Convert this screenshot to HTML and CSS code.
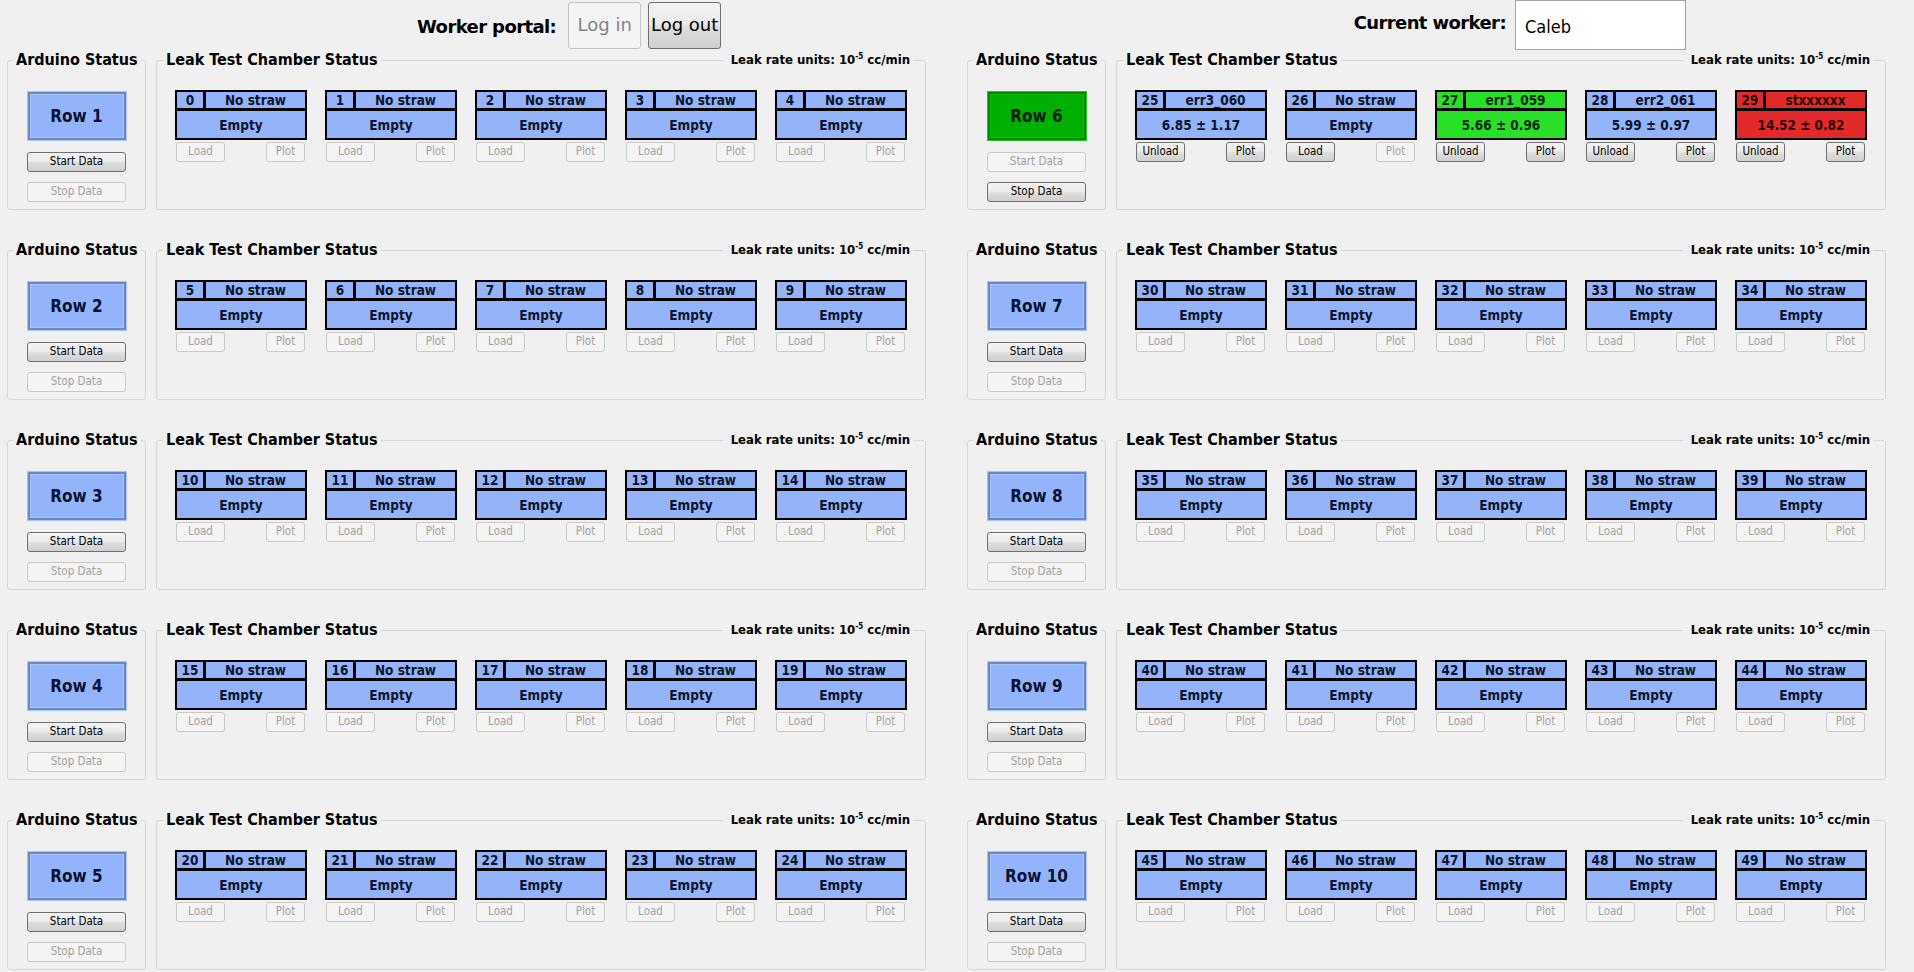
FILE: index.html
```html
<!DOCTYPE html>
<html>
<head>
<meta charset="utf-8">
<link rel="stylesheet" href="styles.css">
</head>
<body>
<div class="topbar">
  <div class="portal">
    <span class="big-label">Worker portal:</span>
    <button class="btn bigbtn" disabled>Log in</button>
    <button class="btn bigbtn">Log out</button>
  </div>
  <div class="worker">
    <span class="big-label cw">Current worker:</span>
    <div class="input">Caleb</div>
  </div>
</div>

<div class="grid">

<!-- Row 1 -->
<div class="row">
  <fieldset class="ard"><legend>Arduino Status</legend>
    <div class="rowbtn">Row 1</div>
    <button class="btn data start">Start Data</button>
    <button class="btn data stop" disabled>Stop Data</button>
  </fieldset>
  <fieldset class="leak"><legend class="leakleg"><span>Leak Test Chamber Status</span><span class="rule"></span><span class="units">Leak rate units: 10<sup>-5</sup> cc/min</span></legend>
    <div class="chambers">
      <div class="slot"><div class="cham"><span class="num">0</span><span class="name">No straw</span><span class="val">Empty</span></div><div class="acts"><button class="btn load" disabled>Load</button><button class="btn plot" disabled>Plot</button></div></div>
      <div class="slot"><div class="cham"><span class="num">1</span><span class="name">No straw</span><span class="val">Empty</span></div><div class="acts"><button class="btn load" disabled>Load</button><button class="btn plot" disabled>Plot</button></div></div>
      <div class="slot"><div class="cham"><span class="num">2</span><span class="name">No straw</span><span class="val">Empty</span></div><div class="acts"><button class="btn load" disabled>Load</button><button class="btn plot" disabled>Plot</button></div></div>
      <div class="slot"><div class="cham"><span class="num">3</span><span class="name">No straw</span><span class="val">Empty</span></div><div class="acts"><button class="btn load" disabled>Load</button><button class="btn plot" disabled>Plot</button></div></div>
      <div class="slot"><div class="cham"><span class="num">4</span><span class="name">No straw</span><span class="val">Empty</span></div><div class="acts"><button class="btn load" disabled>Load</button><button class="btn plot" disabled>Plot</button></div></div>
    </div>
  </fieldset>
</div>

<!-- Row 2 -->
<div class="row">
  <fieldset class="ard"><legend>Arduino Status</legend>
    <div class="rowbtn">Row 2</div>
    <button class="btn data start">Start Data</button>
    <button class="btn data stop" disabled>Stop Data</button>
  </fieldset>
  <fieldset class="leak"><legend class="leakleg"><span>Leak Test Chamber Status</span><span class="rule"></span><span class="units">Leak rate units: 10<sup>-5</sup> cc/min</span></legend>
    <div class="chambers">
      <div class="slot"><div class="cham"><span class="num">5</span><span class="name">No straw</span><span class="val">Empty</span></div><div class="acts"><button class="btn load" disabled>Load</button><button class="btn plot" disabled>Plot</button></div></div>
      <div class="slot"><div class="cham"><span class="num">6</span><span class="name">No straw</span><span class="val">Empty</span></div><div class="acts"><button class="btn load" disabled>Load</button><button class="btn plot" disabled>Plot</button></div></div>
      <div class="slot"><div class="cham"><span class="num">7</span><span class="name">No straw</span><span class="val">Empty</span></div><div class="acts"><button class="btn load" disabled>Load</button><button class="btn plot" disabled>Plot</button></div></div>
      <div class="slot"><div class="cham"><span class="num">8</span><span class="name">No straw</span><span class="val">Empty</span></div><div class="acts"><button class="btn load" disabled>Load</button><button class="btn plot" disabled>Plot</button></div></div>
      <div class="slot"><div class="cham"><span class="num">9</span><span class="name">No straw</span><span class="val">Empty</span></div><div class="acts"><button class="btn load" disabled>Load</button><button class="btn plot" disabled>Plot</button></div></div>
    </div>
  </fieldset>
</div>

<!-- Row 3 -->
<div class="row">
  <fieldset class="ard"><legend>Arduino Status</legend>
    <div class="rowbtn">Row 3</div>
    <button class="btn data start">Start Data</button>
    <button class="btn data stop" disabled>Stop Data</button>
  </fieldset>
  <fieldset class="leak"><legend class="leakleg"><span>Leak Test Chamber Status</span><span class="rule"></span><span class="units">Leak rate units: 10<sup>-5</sup> cc/min</span></legend>
    <div class="chambers">
      <div class="slot"><div class="cham"><span class="num">10</span><span class="name">No straw</span><span class="val">Empty</span></div><div class="acts"><button class="btn load" disabled>Load</button><button class="btn plot" disabled>Plot</button></div></div>
      <div class="slot"><div class="cham"><span class="num">11</span><span class="name">No straw</span><span class="val">Empty</span></div><div class="acts"><button class="btn load" disabled>Load</button><button class="btn plot" disabled>Plot</button></div></div>
      <div class="slot"><div class="cham"><span class="num">12</span><span class="name">No straw</span><span class="val">Empty</span></div><div class="acts"><button class="btn load" disabled>Load</button><button class="btn plot" disabled>Plot</button></div></div>
      <div class="slot"><div class="cham"><span class="num">13</span><span class="name">No straw</span><span class="val">Empty</span></div><div class="acts"><button class="btn load" disabled>Load</button><button class="btn plot" disabled>Plot</button></div></div>
      <div class="slot"><div class="cham"><span class="num">14</span><span class="name">No straw</span><span class="val">Empty</span></div><div class="acts"><button class="btn load" disabled>Load</button><button class="btn plot" disabled>Plot</button></div></div>
    </div>
  </fieldset>
</div>

<!-- Row 4 -->
<div class="row">
  <fieldset class="ard"><legend>Arduino Status</legend>
    <div class="rowbtn">Row 4</div>
    <button class="btn data start">Start Data</button>
    <button class="btn data stop" disabled>Stop Data</button>
  </fieldset>
  <fieldset class="leak"><legend class="leakleg"><span>Leak Test Chamber Status</span><span class="rule"></span><span class="units">Leak rate units: 10<sup>-5</sup> cc/min</span></legend>
    <div class="chambers">
      <div class="slot"><div class="cham"><span class="num">15</span><span class="name">No straw</span><span class="val">Empty</span></div><div class="acts"><button class="btn load" disabled>Load</button><button class="btn plot" disabled>Plot</button></div></div>
      <div class="slot"><div class="cham"><span class="num">16</span><span class="name">No straw</span><span class="val">Empty</span></div><div class="acts"><button class="btn load" disabled>Load</button><button class="btn plot" disabled>Plot</button></div></div>
      <div class="slot"><div class="cham"><span class="num">17</span><span class="name">No straw</span><span class="val">Empty</span></div><div class="acts"><button class="btn load" disabled>Load</button><button class="btn plot" disabled>Plot</button></div></div>
      <div class="slot"><div class="cham"><span class="num">18</span><span class="name">No straw</span><span class="val">Empty</span></div><div class="acts"><button class="btn load" disabled>Load</button><button class="btn plot" disabled>Plot</button></div></div>
      <div class="slot"><div class="cham"><span class="num">19</span><span class="name">No straw</span><span class="val">Empty</span></div><div class="acts"><button class="btn load" disabled>Load</button><button class="btn plot" disabled>Plot</button></div></div>
    </div>
  </fieldset>
</div>

<!-- Row 5 -->
<div class="row">
  <fieldset class="ard"><legend>Arduino Status</legend>
    <div class="rowbtn">Row 5</div>
    <button class="btn data start">Start Data</button>
    <button class="btn data stop" disabled>Stop Data</button>
  </fieldset>
  <fieldset class="leak"><legend class="leakleg"><span>Leak Test Chamber Status</span><span class="rule"></span><span class="units">Leak rate units: 10<sup>-5</sup> cc/min</span></legend>
    <div class="chambers">
      <div class="slot"><div class="cham"><span class="num">20</span><span class="name">No straw</span><span class="val">Empty</span></div><div class="acts"><button class="btn load" disabled>Load</button><button class="btn plot" disabled>Plot</button></div></div>
      <div class="slot"><div class="cham"><span class="num">21</span><span class="name">No straw</span><span class="val">Empty</span></div><div class="acts"><button class="btn load" disabled>Load</button><button class="btn plot" disabled>Plot</button></div></div>
      <div class="slot"><div class="cham"><span class="num">22</span><span class="name">No straw</span><span class="val">Empty</span></div><div class="acts"><button class="btn load" disabled>Load</button><button class="btn plot" disabled>Plot</button></div></div>
      <div class="slot"><div class="cham"><span class="num">23</span><span class="name">No straw</span><span class="val">Empty</span></div><div class="acts"><button class="btn load" disabled>Load</button><button class="btn plot" disabled>Plot</button></div></div>
      <div class="slot"><div class="cham"><span class="num">24</span><span class="name">No straw</span><span class="val">Empty</span></div><div class="acts"><button class="btn load" disabled>Load</button><button class="btn plot" disabled>Plot</button></div></div>
    </div>
  </fieldset>
</div>

<!-- Row 6 -->
<div class="row">
  <fieldset class="ard"><legend>Arduino Status</legend>
    <div class="rowbtn on">Row 6</div>
    <button class="btn data start" disabled>Start Data</button>
    <button class="btn data stop">Stop Data</button>
  </fieldset>
  <fieldset class="leak"><legend class="leakleg"><span>Leak Test Chamber Status</span><span class="rule"></span><span class="units">Leak rate units: 10<sup>-5</sup> cc/min</span></legend>
    <div class="chambers">
      <div class="slot"><div class="cham"><span class="num">25</span><span class="name">err3_060</span><span class="val">6.85 ± 1.17</span></div><div class="acts"><button class="btn load">Unload</button><button class="btn plot">Plot</button></div></div>
      <div class="slot"><div class="cham"><span class="num">26</span><span class="name">No straw</span><span class="val">Empty</span></div><div class="acts"><button class="btn load">Load</button><button class="btn plot" disabled>Plot</button></div></div>
      <div class="slot"><div class="cham green"><span class="num">27</span><span class="name">err1_059</span><span class="val">5.66 ± 0.96</span></div><div class="acts"><button class="btn load">Unload</button><button class="btn plot">Plot</button></div></div>
      <div class="slot"><div class="cham"><span class="num">28</span><span class="name">err2_061</span><span class="val">5.99 ± 0.97</span></div><div class="acts"><button class="btn load">Unload</button><button class="btn plot">Plot</button></div></div>
      <div class="slot"><div class="cham red"><span class="num">29</span><span class="name">stxxxxxx</span><span class="val">14.52 ± 0.82</span></div><div class="acts"><button class="btn load">Unload</button><button class="btn plot">Plot</button></div></div>
    </div>
  </fieldset>
</div>

<!-- Row 7 -->
<div class="row">
  <fieldset class="ard"><legend>Arduino Status</legend>
    <div class="rowbtn">Row 7</div>
    <button class="btn data start">Start Data</button>
    <button class="btn data stop" disabled>Stop Data</button>
  </fieldset>
  <fieldset class="leak"><legend class="leakleg"><span>Leak Test Chamber Status</span><span class="rule"></span><span class="units">Leak rate units: 10<sup>-5</sup> cc/min</span></legend>
    <div class="chambers">
      <div class="slot"><div class="cham"><span class="num">30</span><span class="name">No straw</span><span class="val">Empty</span></div><div class="acts"><button class="btn load" disabled>Load</button><button class="btn plot" disabled>Plot</button></div></div>
      <div class="slot"><div class="cham"><span class="num">31</span><span class="name">No straw</span><span class="val">Empty</span></div><div class="acts"><button class="btn load" disabled>Load</button><button class="btn plot" disabled>Plot</button></div></div>
      <div class="slot"><div class="cham"><span class="num">32</span><span class="name">No straw</span><span class="val">Empty</span></div><div class="acts"><button class="btn load" disabled>Load</button><button class="btn plot" disabled>Plot</button></div></div>
      <div class="slot"><div class="cham"><span class="num">33</span><span class="name">No straw</span><span class="val">Empty</span></div><div class="acts"><button class="btn load" disabled>Load</button><button class="btn plot" disabled>Plot</button></div></div>
      <div class="slot"><div class="cham"><span class="num">34</span><span class="name">No straw</span><span class="val">Empty</span></div><div class="acts"><button class="btn load" disabled>Load</button><button class="btn plot" disabled>Plot</button></div></div>
    </div>
  </fieldset>
</div>

<!-- Row 8 -->
<div class="row">
  <fieldset class="ard"><legend>Arduino Status</legend>
    <div class="rowbtn">Row 8</div>
    <button class="btn data start">Start Data</button>
    <button class="btn data stop" disabled>Stop Data</button>
  </fieldset>
  <fieldset class="leak"><legend class="leakleg"><span>Leak Test Chamber Status</span><span class="rule"></span><span class="units">Leak rate units: 10<sup>-5</sup> cc/min</span></legend>
    <div class="chambers">
      <div class="slot"><div class="cham"><span class="num">35</span><span class="name">No straw</span><span class="val">Empty</span></div><div class="acts"><button class="btn load" disabled>Load</button><button class="btn plot" disabled>Plot</button></div></div>
      <div class="slot"><div class="cham"><span class="num">36</span><span class="name">No straw</span><span class="val">Empty</span></div><div class="acts"><button class="btn load" disabled>Load</button><button class="btn plot" disabled>Plot</button></div></div>
      <div class="slot"><div class="cham"><span class="num">37</span><span class="name">No straw</span><span class="val">Empty</span></div><div class="acts"><button class="btn load" disabled>Load</button><button class="btn plot" disabled>Plot</button></div></div>
      <div class="slot"><div class="cham"><span class="num">38</span><span class="name">No straw</span><span class="val">Empty</span></div><div class="acts"><button class="btn load" disabled>Load</button><button class="btn plot" disabled>Plot</button></div></div>
      <div class="slot"><div class="cham"><span class="num">39</span><span class="name">No straw</span><span class="val">Empty</span></div><div class="acts"><button class="btn load" disabled>Load</button><button class="btn plot" disabled>Plot</button></div></div>
    </div>
  </fieldset>
</div>

<!-- Row 9 -->
<div class="row">
  <fieldset class="ard"><legend>Arduino Status</legend>
    <div class="rowbtn">Row 9</div>
    <button class="btn data start">Start Data</button>
    <button class="btn data stop" disabled>Stop Data</button>
  </fieldset>
  <fieldset class="leak"><legend class="leakleg"><span>Leak Test Chamber Status</span><span class="rule"></span><span class="units">Leak rate units: 10<sup>-5</sup> cc/min</span></legend>
    <div class="chambers">
      <div class="slot"><div class="cham"><span class="num">40</span><span class="name">No straw</span><span class="val">Empty</span></div><div class="acts"><button class="btn load" disabled>Load</button><button class="btn plot" disabled>Plot</button></div></div>
      <div class="slot"><div class="cham"><span class="num">41</span><span class="name">No straw</span><span class="val">Empty</span></div><div class="acts"><button class="btn load" disabled>Load</button><button class="btn plot" disabled>Plot</button></div></div>
      <div class="slot"><div class="cham"><span class="num">42</span><span class="name">No straw</span><span class="val">Empty</span></div><div class="acts"><button class="btn load" disabled>Load</button><button class="btn plot" disabled>Plot</button></div></div>
      <div class="slot"><div class="cham"><span class="num">43</span><span class="name">No straw</span><span class="val">Empty</span></div><div class="acts"><button class="btn load" disabled>Load</button><button class="btn plot" disabled>Plot</button></div></div>
      <div class="slot"><div class="cham"><span class="num">44</span><span class="name">No straw</span><span class="val">Empty</span></div><div class="acts"><button class="btn load" disabled>Load</button><button class="btn plot" disabled>Plot</button></div></div>
    </div>
  </fieldset>
</div>

<!-- Row 10 -->
<div class="row">
  <fieldset class="ard"><legend>Arduino Status</legend>
    <div class="rowbtn">Row 10</div>
    <button class="btn data start">Start Data</button>
    <button class="btn data stop" disabled>Stop Data</button>
  </fieldset>
  <fieldset class="leak"><legend class="leakleg"><span>Leak Test Chamber Status</span><span class="rule"></span><span class="units">Leak rate units: 10<sup>-5</sup> cc/min</span></legend>
    <div class="chambers">
      <div class="slot"><div class="cham"><span class="num">45</span><span class="name">No straw</span><span class="val">Empty</span></div><div class="acts"><button class="btn load" disabled>Load</button><button class="btn plot" disabled>Plot</button></div></div>
      <div class="slot"><div class="cham"><span class="num">46</span><span class="name">No straw</span><span class="val">Empty</span></div><div class="acts"><button class="btn load" disabled>Load</button><button class="btn plot" disabled>Plot</button></div></div>
      <div class="slot"><div class="cham"><span class="num">47</span><span class="name">No straw</span><span class="val">Empty</span></div><div class="acts"><button class="btn load" disabled>Load</button><button class="btn plot" disabled>Plot</button></div></div>
      <div class="slot"><div class="cham"><span class="num">48</span><span class="name">No straw</span><span class="val">Empty</span></div><div class="acts"><button class="btn load" disabled>Load</button><button class="btn plot" disabled>Plot</button></div></div>
      <div class="slot"><div class="cham"><span class="num">49</span><span class="name">No straw</span><span class="val">Empty</span></div><div class="acts"><button class="btn load" disabled>Load</button><button class="btn plot" disabled>Plot</button></div></div>
    </div>
  </fieldset>
</div>

</div>
</body>
</html>
```

FILE: styles.css
```css
html, body {
  margin: 0;
  padding: 0;
}
body {
  background: #f0f0f0;
  font-family: "DejaVu Sans Condensed", "DejaVu Sans", sans-serif;
  font-stretch: condensed;
  color: #000;
  width: 1914px;
  height: 972px;
  overflow: hidden;
}

/* ---------- top bar ---------- */
.topbar {
  display: flex;
  justify-content: space-between;
  align-items: center;
  height: 50px;
  padding: 0 228px 0 417px;
}
.portal {
  display: flex;
  align-items: center;
  gap: 7px;
}
.portal .big-label {
  margin-right: 5px;
  margin-top: 2px;
}
.big-label {
  font-weight: bold;
  font-size: 18px;
  font-stretch: normal;
  font-family: "DejaVu Sans", sans-serif;
  letter-spacing: -0.6px;
}
.worker {
  display: flex;
  align-items: center;
  gap: 9px;
}
.cw {
  margin-bottom: 5px;
}
.input {
  width: 171px;
  height: 50px;
  box-sizing: border-box;
  border: 1px solid #a5a5a5;
  background: #fff;
  font-size: 18px;
  padding: 2px 0 0 9px;
  display: flex;
  align-items: center;
}

/* ---------- buttons ---------- */
.btn {
  font-family: inherit;
  font-stretch: condensed;
  box-sizing: border-box;
  height: 20px;
  padding: 0;
  border: 1px solid #707070;
  border-radius: 3px;
  background: linear-gradient(#f3f3f3, #ececec 45%, #dddddd 55%, #cfcfcf);
  color: #000;
  font-size: 11.5px;
  line-height: 1;
}
.btn:disabled {
  background: #f4f4f4;
  border-color: #c9c9c9;
  color: #a2a2a2;
}
.bigbtn {
  width: 73px;
  height: 47px;
  font-family: "DejaVu Sans", sans-serif;
  font-stretch: normal;
  font-size: 18px;
}
.bigbtn:disabled {
  border-color: #c4c4c4;
  color: #838383;
}

/* ---------- grid of rows ---------- */
.grid {
  display: grid;
  grid-template-columns: 919px 919px;
  grid-template-rows: repeat(5, 160px);
  grid-auto-flow: column;
  column-gap: 41px;
  row-gap: 30px;
  padding-left: 7px;
}
.row {
  display: flex;
  gap: 10px;
  height: 160px;
}

fieldset {
  margin: 0;
  min-width: 0;
  box-sizing: border-box;
  border: 1px solid #d6d6d6;
  border-radius: 3px;
}
legend {
  font-size: 16px;
  font-weight: bold;
  line-height: 20px;
  padding: 0 3px;
  white-space: nowrap;
}

.ard {
  width: 139px;
  padding: 0 3px 7px 5px;
  display: flex;
  flex-direction: column;
  align-items: center;
}
.rowbtn {
  width: 100px;
  height: 50px;
  flex: none;
  box-sizing: border-box;
  margin-top: 21px;
  margin-right: 2px;
  border: 1px solid #a9c1f4;
  background: #93b4fb;
  box-shadow: inset 0 0 0 2px #6f87bf, inset 0 0 0 3px #a9c4ff;
  display: flex;
  align-items: center;
  justify-content: center;
  font-size: 17px;
  font-weight: bold;
  color: #0b1230;
}
.rowbtn.on {
  background: #00b000;
  border-color: #22c522;
  box-shadow: inset 0 0 0 2px #008a00, inset 0 0 0 3px #10bb10;
  color: #002000;
}
.data {
  width: 99px;
  flex: none;
  margin-right: 2px;
}
.start {
  margin-top: 11px;
}
.stop {
  margin-top: 10px;
}

.leak {
  width: 770px;
  padding: 0 12px 7px 6px;
}
.leakleg {
  width: 100%;
  box-sizing: border-box;
  display: flex;
  align-items: center;
}
.rule {
  flex: 1;
  height: 1px;
  background: #d6d6d6;
  margin: 0 8px 0 3px;
}
.units {
  font-size: 13px;
}
.units sup {
  font-size: 8px;
  line-height: 0;
  vertical-align: 5px;
}

.chambers {
  display: flex;
  gap: 18px;
  margin-top: 20px;
  padding-left: 12px;
}
.slot {
  width: 132px;
}
.cham {
  display: grid;
  grid-template-columns: 26px 1fr;
  grid-template-rows: 16px 27px;
  gap: 3px;
  padding: 2px;
  background: #000;
  font-size: 13.5px;
  font-weight: bold;
  color: #10142a;
}
.cham span {
  background: #93b4fb;
  display: flex;
  align-items: center;
  justify-content: center;
  white-space: nowrap;
}
.cham .val {
  grid-column: 1 / span 2;
}
.cham.green span {
  background: #28e028;
  color: #0a2a0a;
}
.cham.red span {
  background: #e22a2a;
  color: #2a0505;
}
.acts {
  display: flex;
  justify-content: space-between;
  margin-top: 2px;
  padding: 0 2px 0 1px;
}
.load {
  width: 49px;
}
.plot {
  width: 39px;
}
```
